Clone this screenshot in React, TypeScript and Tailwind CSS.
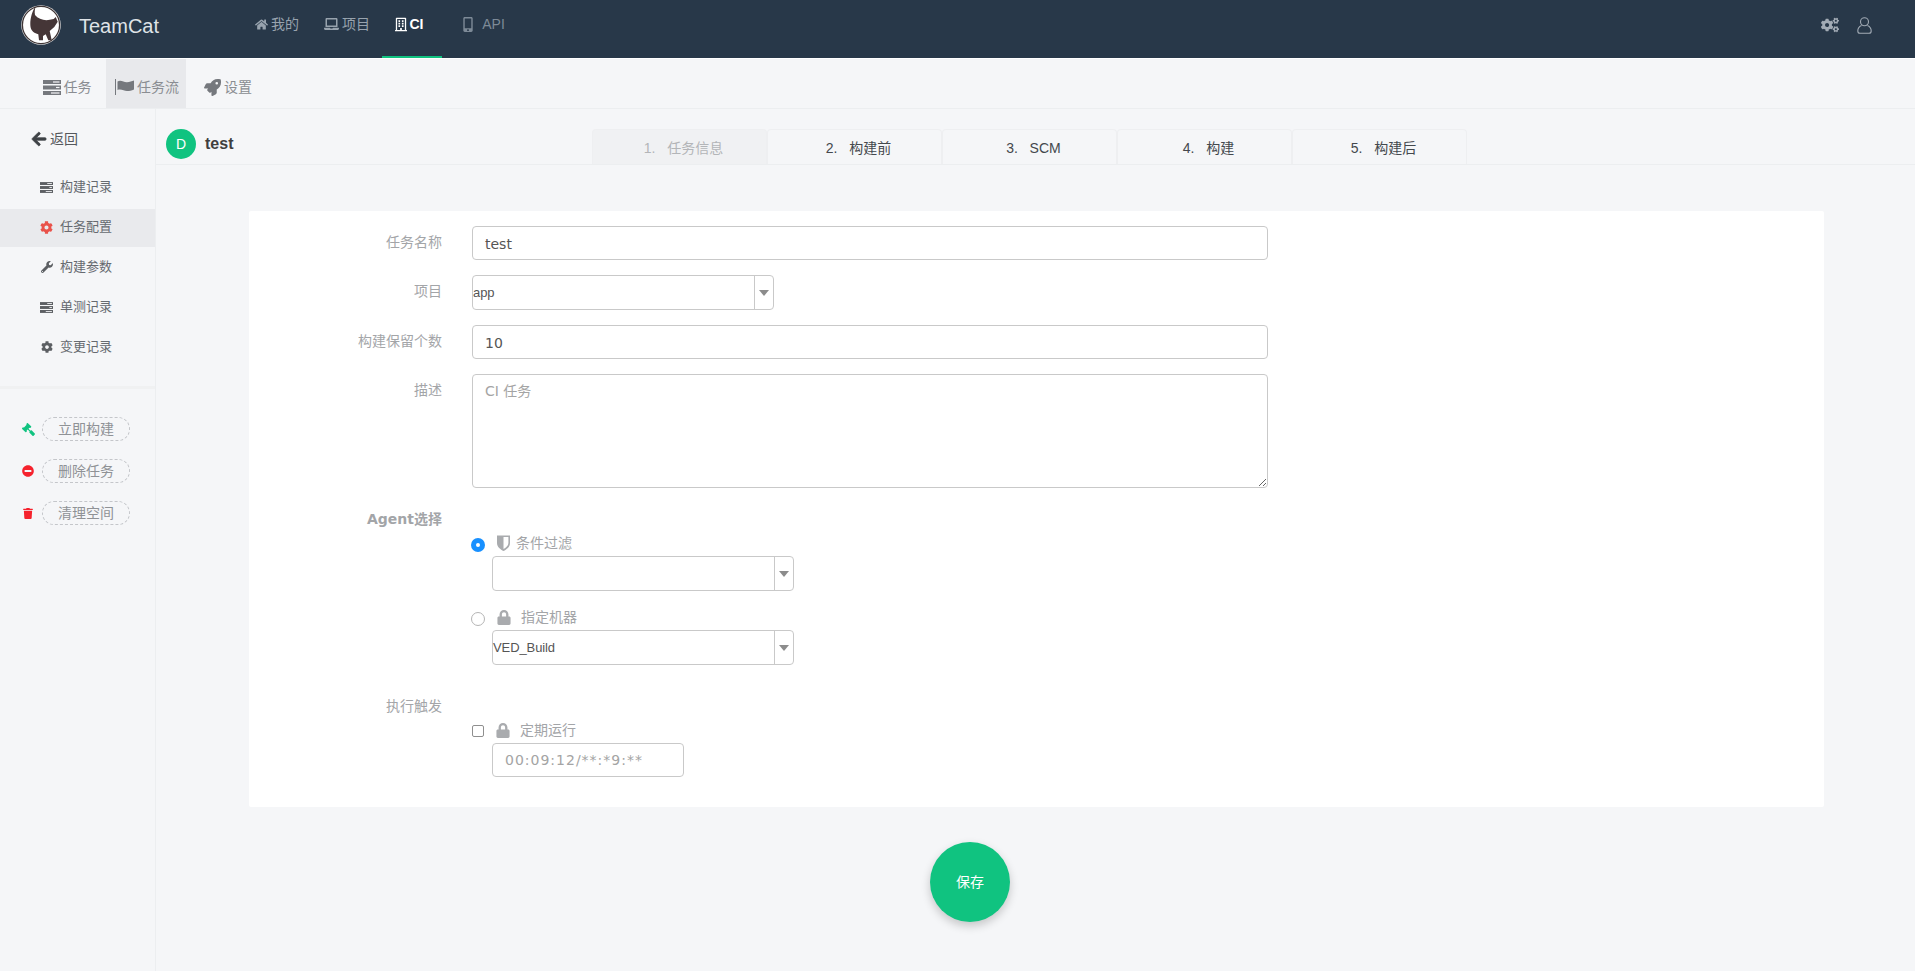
import React from "react";
import {
  FaHome,
  FaLaptop,
  FaRegBuilding,
  FaMobileAlt,
  FaRocket,
  FaArrowLeft,
  FaCog,
  FaWrench,
  FaGavel,
  FaMinusCircle,
  FaTrash,
  FaLock,
  FaCogs,
} from "react-icons/fa";

function Logo() {
  return (
    <svg viewBox="0 0 40 40" className="w-10 h-10">
      <circle cx="20" cy="20" r="19.8" fill="#e8e6e6" />
      <circle cx="20" cy="20" r="18.6" fill="#fff" stroke="#3f3535" strokeWidth="1.3" />
      <path
        d="M14.7 1.3 C11.3 6 9.3 12.7 9.3 19.3 C9.3 24.3 11.3 27.7 17.3 29.3 L18 35.3 L22 35.3 L22 31 L24.7 29.3 L27.3 35.3 L30.7 35.3 L28.7 26 L33.3 22 L36.7 16.7 L34.7 12 L32.7 14 L28.7 14.7 C24 16 17.3 14.3 14 10 C13.3 6.7 14 4 14.7 1.3 Z"
        fill="#453637"
      />
    </svg>
  );
}

function UserIcon({ className }: { className?: string }) {
  return (
    <svg viewBox="0 0 15 17" className={className} fill="none" stroke="currentColor" strokeWidth="1.1">
      <circle cx="7.5" cy="4.8" r="4" />
      <path d="M4.5 8.5 C2.2 9.5 0.8 11 0.8 14 C0.8 15.5 1.5 16.3 3 16.3 H12 C13.5 16.3 14.2 15.5 14.2 14 C14.2 11 12.8 9.5 10.5 8.5" />
    </svg>
  );
}

function ServerIcon({ className }: { className?: string }) {
  return (
    <svg viewBox="0 0 18 15" className={className}>
      <rect x="0" y="0" width="18" height="4" fill="currentColor" />
      <rect x="0" y="5.5" width="18" height="4" fill="currentColor" />
      <rect x="0" y="11" width="18" height="4" fill="currentColor" />
      <rect x="10" y="1.4" width="6.5" height="1.2" fill="#f5f6f8" />
      <rect x="13" y="6.9" width="3.5" height="1.2" fill="#f5f6f8" />
      <rect x="8" y="12.4" width="8.5" height="1.2" fill="#f5f6f8" />
    </svg>
  );
}

function FlagIcon({ className }: { className?: string }) {
  return (
    <svg viewBox="0 0 19 16" className={className} fill="currentColor">
      <rect x="0" y="0" width="1" height="16" />
      <path d="M2.5 2.5 C6 0.5 9 3.5 12 3.2 C14.5 3 17 2 19 1.5 V10.5 C16.5 11.5 14.5 12 12 12 C9 12 6 9.5 2.5 11 Z" />
    </svg>
  );
}

function HalfShield({ className }: { className?: string }) {
  return (
    <svg viewBox="0 0 13 16" className={className} fill="currentColor">
      <path d="M0 0.5 H13 V8 C13 12 9.5 14.5 6.5 16 C3.5 14.5 0 12 0 8 Z M6.5 2 V14 C8.8 12.8 11.4 10.8 11.4 8 V2 Z" fillRule="evenodd" />
    </svg>
  );
}

function NavItem({
  icon,
  label,
  active,
  width,
  dim,
}: {
  icon: React.ReactNode;
  label: string;
  active?: boolean;
  width: string;
  dim?: boolean;
}) {
  return (
    <div
      className={`${width} h-[58px] flex items-center justify-center gap-[3px] pb-[8px] border-b-[2px] text-[14px] ${
        active
          ? "border-[#10c380] text-white font-bold pr-[6px]"
          : dim
          ? "border-transparent text-[#7d8a97]"
          : "border-transparent text-[#98a3ae]"
      }`}
    >
      {icon}
      <span>{label}</span>
    </div>
  );
}

function SubItem({ icon, label, active, className }: { icon: React.ReactNode; label: string; active?: boolean; className: string }) {
  return (
    <div className={`h-[49px] pt-[7px] flex items-center justify-center gap-[3px] text-[14px] text-[#8a8d92] ${active ? "bg-[#e8e9ec] pl-[2px]" : ""} ${className}`}>
      {icon}
      <span>{label}</span>
    </div>
  );
}

function SideRow({ icon, label, active }: { icon: React.ReactNode; label: string; active?: boolean }) {
  return (
    <div className={`h-[38px] flex items-center pl-[40px] pb-[2px] text-[13px] text-[#666a70] ${active ? "bg-[#e9eaed]" : ""}`}>
      <span className="w-[13px] flex justify-center">{icon}</span>
      <span className="ml-[7px]">{label}</span>
    </div>
  );
}

function ActionBtn({ icon, label }: { icon: React.ReactNode; label: string }) {
  return (
    <div className="flex items-center h-6 pl-[22px]">
      <span className="w-[20px] flex">{icon}</span>
      <div className="w-[88px] h-6 rounded-xl border border-dashed border-[#c4c6ca] flex items-center justify-center text-[14px] text-[#8f9296]">
        {label}
      </div>
    </div>
  );
}

function Tab({ label, first }: { label: React.ReactNode; first?: boolean }) {
  return (
    <div
      className={`w-[175px] h-[35px] flex items-center justify-center pl-[8px] pt-[2px] rounded-t-[4px] border border-b-0 border-[#eeeff1] text-[14px] ${
        first ? "bg-[#f0f1f3] text-[#b3b5b8]" : "text-[#44484d]"
      }`}
    >
      {label}
    </div>
  );
}

function FormLabel({ children, bold }: { children: React.ReactNode; bold?: boolean }) {
  return (
    <div className={`w-[193px] text-right text-[14px] text-[#a3a5a8] shrink-0 ${bold ? "font-bold" : ""}`}>{children}</div>
  );
}

function Select({ value, width, arrowAt }: { value: string; width: string; arrowAt: string }) {
  return (
    <div className={`${width} h-[35px] rounded-[4px] border border-[#c9c9c9] flex items-center bg-white`}>
      <div className="flex-1 text-[13px] text-[#555] -tracking-[0.1px]">{value}</div>
      <div className={`${arrowAt} h-full border-l border-[#c9c9c9] flex items-center justify-center`}>
        <span className="w-0 h-0 border-x-[5px] border-x-transparent border-t-[6px] border-t-[#8c8c8c]" />
      </div>
    </div>
  );
}

function TextBox({ children, width, muted, tracking }: { children: React.ReactNode; width: string; muted?: boolean; tracking?: boolean }) {
  return (
    <div
      className={`${width} h-[34px] rounded-[4px] border border-[#c9c9c9] flex items-center pl-[12px] text-[14px] bg-white font-['DejaVu_Sans','Noto_Sans_CJK_SC',sans-serif] ${
        muted ? "text-[#a4a4a4]" : "text-[#555]"
      } ${tracking ? "tracking-[1px] pt-px" : "pt-[2px]"}`}
    >
      {children}
    </div>
  );
}

export default function App() {
  return (
    <div className="h-[971px] overflow-hidden flex flex-col bg-[#f5f6f8] font-['Liberation_Sans','Noto_Sans_CJK_SC',sans-serif]">
      <header className="h-[58px] bg-[#283849] flex items-center shrink-0">
        <div className="ml-[21px] mb-[9px]">
          <Logo />
        </div>
        <div className="ml-[18px] w-[79px] text-[20px] text-[#dfe3e7] pb-[7px]">TeamCat</div>
        <div className="ml-[84px] flex items-start">
          <NavItem width="w-[70px]" icon={<FaHome className="w-[13px] h-[13px]" />} label="我的" />
          <NavItem width="w-[70px]" icon={<FaLaptop className="w-[15px] h-[14px]" />} label="项目" />
          <NavItem width="w-[60px]" active icon={<FaRegBuilding className="w-[12px] h-[15px]" />} label="CI" />
          <NavItem width="w-[83px]" dim icon={<FaMobileAlt className="w-[12px] h-[15px] mr-[5px]" />} label="API" />
        </div>
        <div className="ml-auto mr-[43px] mb-[8px] flex items-center gap-[18px] text-[#a2abb5]">
          <FaCogs className="w-[18px] h-[16px]" />
          <UserIcon className="w-[15px] h-[17px]" />
        </div>
      </header>
      <div className="h-px bg-white shrink-0" />
      <nav className="h-[50px] shrink-0 border-b border-[#eceef0] flex pl-[28px]">
        <SubItem className="w-[78px]" icon={<ServerIcon className="w-[18px] h-[15px] text-[#75787d]" />} label="任务" />
        <SubItem className="w-[80px]" active icon={<FlagIcon className="w-[19px] h-[16px] text-[#75787d]" />} label="任务流" />
        <SubItem className="w-[84px]" icon={<FaRocket className="w-[17px] h-[17px] text-[#75787d]" />} label="设置" />
      </nav>
      <div className="flex-1 flex min-h-0">
        <aside className="w-[156px] shrink-0 border-r border-[#eceef0]">
          <div className="h-[60px] flex items-center pl-[31px] gap-[3px] text-[14px] text-[#55585c]">
            <FaArrowLeft stroke="currentColor" strokeWidth={24} className="w-[16px] h-[16px] text-[#3e4246]" />
            <span>返回</span>
          </div>
          <div className="flex flex-col gap-[2px]">
            <SideRow icon={<ServerIcon className="w-[13px] h-[11px] text-[#5c5f63]" />} label="构建记录" />
            <SideRow active icon={<FaCog className="w-[13px] h-[13px] text-[#e9524a]" />} label="任务配置" />
            <SideRow icon={<FaWrench className="w-[12px] h-[12px] text-[#5c5f63]" />} label="构建参数" />
            <SideRow icon={<ServerIcon className="w-[13px] h-[11px] text-[#5c5f63]" />} label="单测记录" />
            <SideRow icon={<FaCog className="w-[12px] h-[12px] text-[#5c5f63]" />} label="变更记录" />
          </div>
          <div className="mt-[19px] h-[3px] bg-[#f0f1f2]" />
          <div className="mt-[28px] flex flex-col gap-[18px]">
            <ActionBtn icon={<FaGavel className="w-[13px] h-[13px] text-[#10c380] -scale-x-100" />} label="立即构建" />
            <ActionBtn icon={<FaMinusCircle className="w-[12px] h-[12px] text-[#f5222d]" />} label="删除任务" />
            <ActionBtn icon={<FaTrash className="w-[10px] h-[11px] text-[#f5222d] ml-px" />} label="清理空间" />
          </div>
        </aside>
        <main className="flex-1 min-w-0 flex flex-col">
          <div className="h-[56px] shrink-0 border-b border-[#eceef0] flex items-start pl-[10px] pt-[20px]">
            <div className="w-[426px] shrink-0 flex items-center">
              <div className="w-[30px] h-[30px] rounded-full bg-[#10c380] flex items-center justify-center text-white text-[14px]">D</div>
              <div className="ml-[9px] text-[16px] font-bold text-[#3f3f3f]">test</div>
            </div>
            <div className="flex">
              <Tab first label={<span>1.&nbsp;&nbsp;&nbsp;任务信息</span>} />
              <Tab label={<span>2.&nbsp;&nbsp;&nbsp;构建前</span>} />
              <Tab label={<span>3.&nbsp;&nbsp;&nbsp;SCM</span>} />
              <Tab label={<span>4.&nbsp;&nbsp;&nbsp;构建</span>} />
              <Tab label={<span>5.&nbsp;&nbsp;&nbsp;构建后</span>} />
            </div>
          </div>
          <section className="mt-[46px] ml-[93px] mr-[91px] h-[596px] bg-white rounded-[2px] pt-[15px] shrink-0">
            <div className="flex items-start">
              <FormLabel>
                <div className="leading-[32px]">任务名称</div>
              </FormLabel>
              <div className="ml-[30px]">
                <TextBox width="w-[796px]">test</TextBox>
              </div>
            </div>
            <div className="flex items-start mt-[15px]">
              <FormLabel>
                <div className="leading-[32px]">项目</div>
              </FormLabel>
              <div className="ml-[30px]">
                <Select value="app" width="w-[302px]" arrowAt="w-[19px]" />
              </div>
            </div>
            <div className="flex items-start mt-[15px]">
              <FormLabel>
                <div className="leading-[32px]">构建保留个数</div>
              </FormLabel>
              <div className="ml-[30px]">
                <TextBox width="w-[796px]">10</TextBox>
              </div>
            </div>
            <div className="flex items-start mt-[15px]">
              <FormLabel>
                <div className="leading-[32px]">描述</div>
              </FormLabel>
              <div className="ml-[30px]">
                <textarea
                  readOnly
                  defaultValue="CI 任务"
                  className="block w-[796px] h-[114px] rounded-[4px] border border-[#c9c9c9] px-[12px] py-[6px] text-[14px] text-[#a4a4a4] outline-none resize-y font-['DejaVu_Sans','Noto_Sans_CJK_SC',sans-serif]"
                />
              </div>
            </div>
            <div className="flex items-start mt-[20px]">
              <FormLabel bold>
                <div className="leading-[22px] font-['DejaVu_Sans','Noto_Sans_CJK_SC',sans-serif]">Agent选择</div>
              </FormLabel>
            </div>
            <div className="ml-[222px] mt-[7px]">
              <div className="flex items-center h-[16px]">
                <span className="w-[14px] h-[14px] rounded-full bg-[#1890ff] flex items-center justify-center">
                  <span className="w-1 h-1 rounded-full bg-white" />
                </span>
                <HalfShield className="ml-[12px] mb-[4px] w-[13px] h-[16px] text-[#a9abae]" />
                <span className="ml-[6px] mb-[4px] text-[14px] text-[#a3a5a8]">条件过滤</span>
              </div>
              <div className="ml-[21px] mt-[3px]">
                <Select value="" width="w-[302px]" arrowAt="w-[19px]" />
              </div>
              <div className="flex items-center h-[16px] mt-[20px]">
                <span className="w-[14px] h-[14px] rounded-full bg-white border border-[#b5b5b5]" />
                <FaLock className="ml-[12px] mb-[4px] w-[14px] h-[15px] text-[#a9abae]" />
                <span className="ml-[10px] mb-[4px] text-[14px] text-[#a3a5a8]">指定机器</span>
              </div>
              <div className="ml-[21px] mt-[3px]">
                <Select value="VED_Build" width="w-[302px]" arrowAt="w-[19px]" />
              </div>
            </div>
            <div className="flex items-start mt-[30px]">
              <FormLabel>
                <div className="leading-[22px]">执行触发</div>
              </FormLabel>
            </div>
            <div className="ml-[222px] mt-[6px]">
              <div className="flex items-center h-[16px]">
                <span className="ml-px w-[12px] h-[12px] rounded-[2px] bg-white border border-[#8f8f8f]" />
                <FaLock className="ml-[12px] mb-[2px] w-[14px] h-[15px] text-[#a9abae]" />
                <span className="ml-[10px] mb-[2px] text-[14px] text-[#a3a5a8]">定期运行</span>
              </div>
              <div className="ml-[21px] mt-[4px]">
                <TextBox width="w-[192px]" muted tracking>
                  00:09:12/**:*9:**
                </TextBox>
              </div>
            </div>
          </section>
          <div className="mt-[35px] ml-[774px]">
            <div className="w-20 h-20 rounded-full bg-[#10c380] flex items-center justify-center text-white text-[14px] shadow-[0_4px_10px_rgba(0,0,0,0.2)]">
              保存
            </div>
          </div>
        </main>
      </div>
    </div>
  );
}
